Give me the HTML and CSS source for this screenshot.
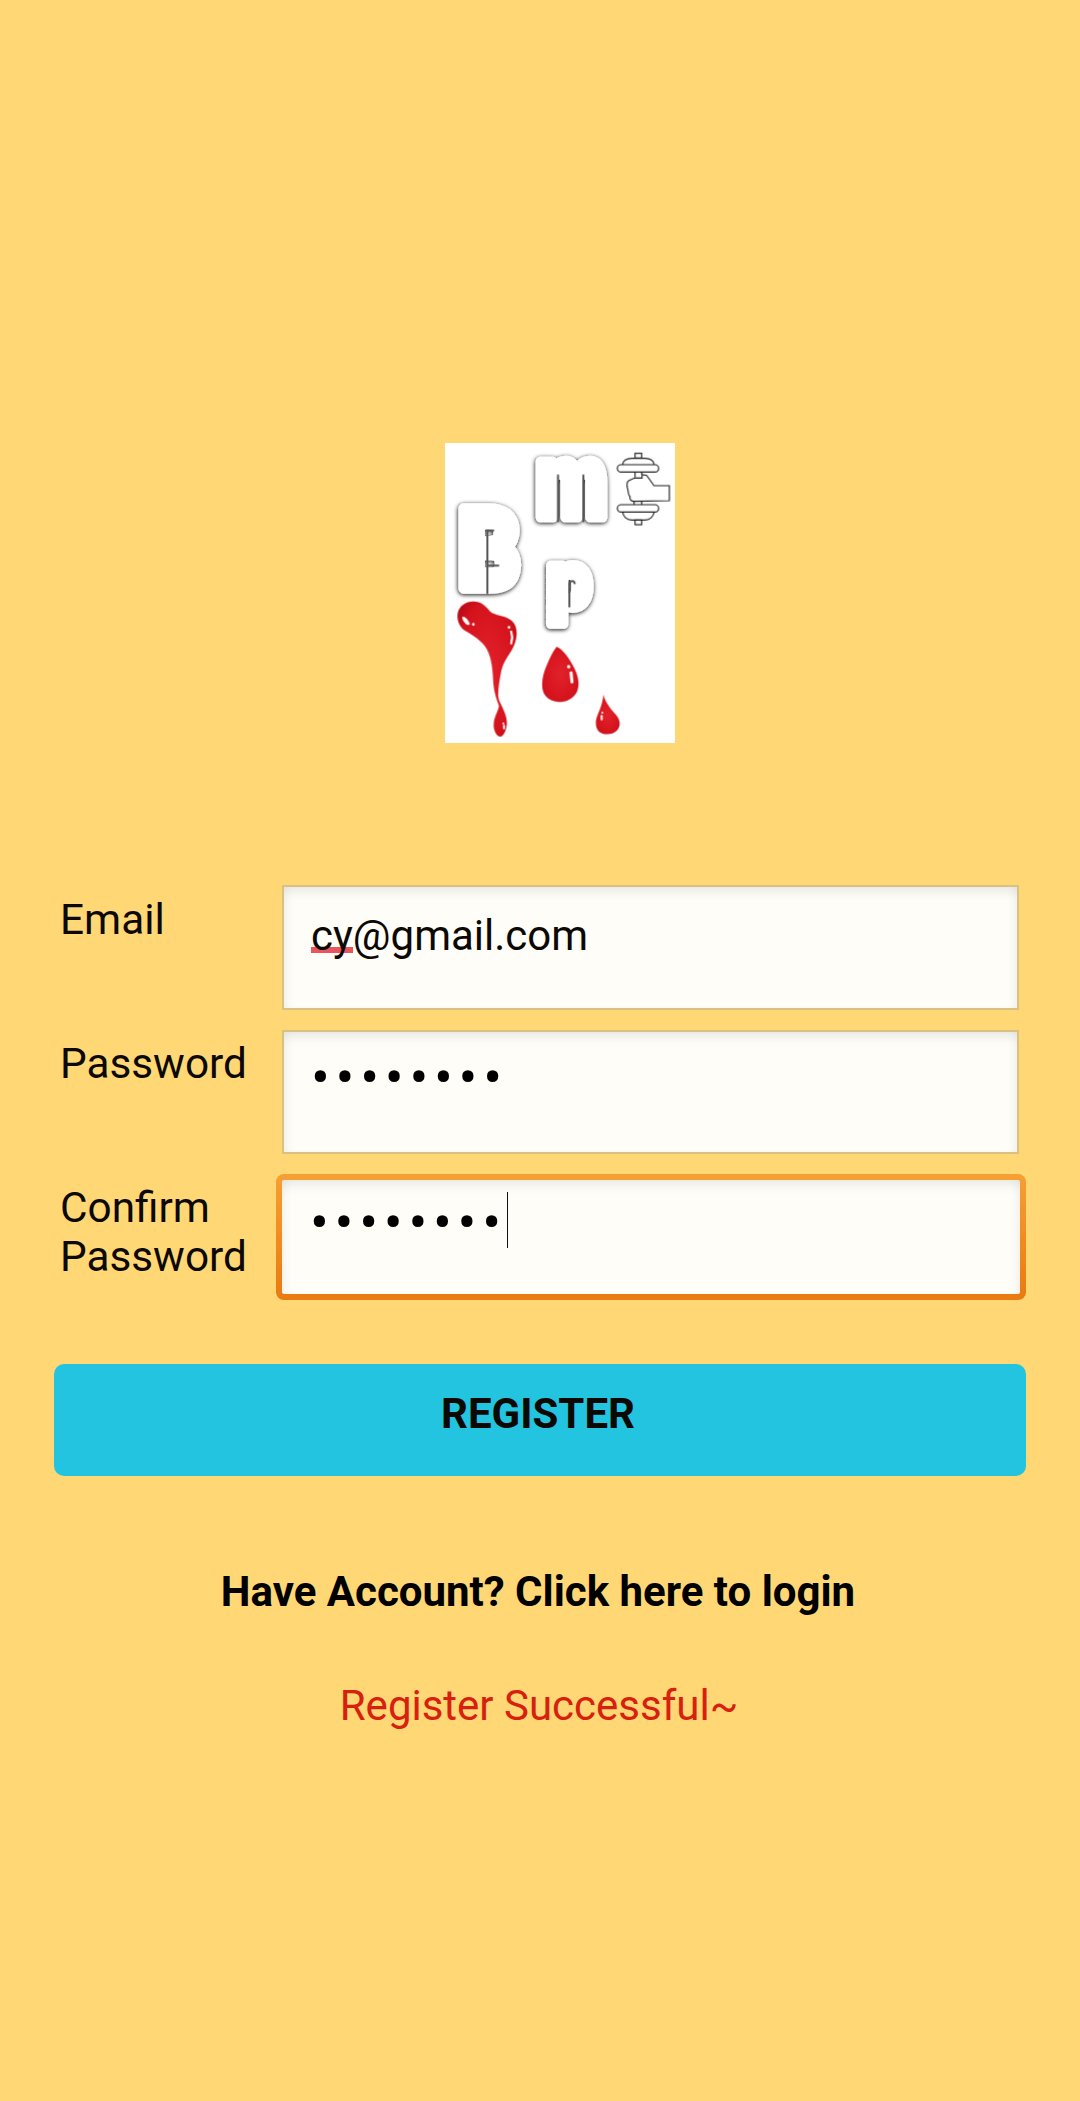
FILE: index.html
```html
<!DOCTYPE html>
<html lang="en">
<head>
<meta charset="utf-8">
<title>Register</title>
<link rel="stylesheet" href="styles.css">
</head>
<body>
<main class="page">
  <svg class="logo" viewBox="45 37 690 900" xmlns="http://www.w3.org/2000/svg" role="img" aria-label="BMP logo">
    <defs>
      <filter id="soft" x="-30%" y="-30%" width="160%" height="160%">
        <feDropShadow dx="-1" dy="3" stdDeviation="7" flood-color="#111" flood-opacity="1"/>
      </filter>
      <filter id="slit" x="-100%" y="-30%" width="300%" height="160%">
        <feGaussianBlur stdDeviation="2"/>
      </filter>
      <radialGradient id="blood" cx=".5" cy=".5" r=".65">
        <stop offset="0" stop-color="#e2222a"/>
        <stop offset=".75" stop-color="#d5131d"/>
        <stop offset="1" stop-color="#b80a14"/>
      </radialGradient>
    </defs>
    <rect x="45" y="37" width="690" height="900" fill="#fff"/>
    <g filter="url(#soft)">
      <text class="logo-letter" transform="translate(318 259) scale(1.076 1.344)">m</text>
      <text class="logo-letter" transform="translate(85 473) scale(1.25 1.455)">B</text>
      <text class="logo-letter logo-p" transform="translate(351 531) scale(1.02 1.03)">p</text>
    </g>
    <g class="logo-slits" filter="url(#slit)">
      <path d="M384 272V134M460 272V134"/>
      <path d="M172 488V300H190M172 405H205"/>
      <path d="M418 528V460C418 450 432 448 434 458"/>
    </g>
    <path fill="url(#blood)" d="M130 512C152 512 166 524 180 542C195 556 225 552 245 570C262 585 264 612 254 640C244 668 222 686 214 720C208 750 203 780 205 800C207 812 212 818 218 832C226 850 233 868 230 886C227 905 218 918 211 918C200 918 190 900 191 882C192 858 203 846 207 826C200 808 192 785 190 760C188 720 186 685 170 655C155 628 125 612 105 600C88 588 80 568 83 548C87 525 108 512 130 512Z"/>
    <path fill="url(#blood)" d="M380 648C398 655 420 685 434 715C446 740 450 765 440 785C428 806 405 815 385 814C360 812 340 798 337 772C334 740 345 715 356 690C364 672 372 658 380 648Z"/>
    <path fill="url(#blood)" d="M520 792C525 815 545 838 560 855C572 870 572 888 560 900C548 912 525 914 510 905C497 896 495 875 500 860C508 840 518 820 520 792Z"/>
    <g fill="#fff">
      <path d="M98 558C104 556 114 566 119 578C120 584 112 584 106 578C100 572 94 562 98 558Z"/>
      <circle cx="130" cy="581" r="4"/>
      <circle cx="237" cy="590" r="4"/>
      <path d="M240 600L246 600L250 620L246 642L240 640L243 620Z"/>
      <circle cx="416" cy="708" r="5"/>
      <rect x="420" y="722" width="9" height="36" rx="4" transform="rotate(-6 424 740)"/>
      <circle cx="517" cy="846" r="3"/>
      <rect x="512" y="853" width="6" height="16" rx="3"/>
      <circle cx="220" cy="878" r="3"/>
      <rect x="219" y="882" width="6" height="14" rx="3"/>
    </g>
    <g class="logo-lines">
      <rect x="615" y="68" width="20" height="14"/>
      <path d="M578 102C578 90 590 83 605 83L645 83C660 83 672 90 672 102"/>
      <rect x="562" y="102" width="124" height="22" rx="11"/>
      <path d="M615 124V140M635 124V132"/>
      <path d="M718 165V210L612 212C604 212 598 206 600 198C592 190 596 180 592 172C590 162 590 154 596 150L614 142H636V132L650 134L672 165Z"/>
      <path d="M612 212V222M635 211V222"/>
      <rect x="562" y="222" width="124" height="22" rx="11"/>
      <path d="M578 244C578 256 590 268 605 268L645 268C660 268 672 256 672 244"/>
      <rect x="615" y="268" width="20" height="14"/>
    </g>
  </svg>

  <form class="form">
    <label class="field-label field-label-first">Email</label>
    <div class="input"><span class="spell">cy</span>@gmail.com</div>

    <label class="field-label">Password</label>
    <div class="input input-dots"><span class="dots">••••••••</span></div>

    <label class="field-label">Confirm Password</label>
    <div class="input input-focus"><span class="dots">••••••••</span><span class="caret"></span></div>
  </form>

  <button class="register" type="button">REGISTER</button>
  <p class="login-link">Have Account? Click here to login</p>
  <p class="message">Register Successful~</p>
</main>
</body>
</html>
```
FILE: styles.css
```css
* { box-sizing: border-box; }
html, body { margin: 0; padding: 0; }
body {
  width: 1080px;
  height: 2101px;
  overflow: hidden;
  background: #ffd875;
  color: #0c0804;
  font-family: Roboto, "Liberation Sans", sans-serif;
  font-size: 42px;
  line-height: 49px;
}
.page { padding: 443px 54px 0; }
.logo {
  display: block;
  width: 230px;
  height: 300px;
  margin-left: 391px;
  overflow: visible;
  filter: blur(.5px);
}
.logo-letter {
  font-family: Roboto, sans-serif;
  font-weight: 900;
  font-size: 230px;
  fill: #fff;
  stroke: #fff;
  stroke-width: 24px;
  stroke-linejoin: round;
}
.logo-p { stroke-width: 28px; }
.logo-slits { fill: none; stroke: #555; stroke-width: 6px; stroke-linecap: round; }
.logo-lines { fill: none; stroke: #1c1c1c; stroke-width: 3.4px; }
.form {
  display: grid;
  grid-template-columns: 222px 737px;
  grid-template-rows: 125px 124px 126px;
  row-gap: 20px;
  margin-top: 142px;
  padding-left: 6px;
}
.field-label { padding-top: 9px; width: 160px; font-size: 42.3px; }
.field-label-first { padding-top: 10px; }
.input {
  position: relative;
  padding: 24px 0 0 27px;
  background: #fffdf8;
  border: 2px solid #d9c182;
  box-shadow: inset 0 10px 10px -4px rgba(70, 70, 60, .09), inset 7px 0 8px -4px rgba(70, 70, 60, .06), inset -7px 0 8px -4px rgba(70, 70, 60, .06);
}
.input-dots { padding-top: 22px; }
.input-focus {
  margin: 0 -7px 0 -6px;
  padding: 19px 0 0 28px;
  border: 6px solid transparent;
  border-radius: 8px;
  background: linear-gradient(#fffdf8, #fffdf8) padding-box, linear-gradient(#f6a033, #e97a10) border-box;
}
.spell {
  display: inline-block;
  background: linear-gradient(#e8555f, #e8555f) no-repeat 0 36px / 100% 6px;
  height: 49px;
}
.dots {
  display: block;
  font-size: 56px;
  line-height: 49px;
  letter-spacing: 5.7px;
  color: #000;
}
.caret {
  position: absolute;
  left: 225px;
  top: 12px;
  width: 1px;
  height: 56px;
  background: #111;
}
.register {
  display: flex;
  justify-content: center;
  align-items: flex-start;
  width: 972px;
  height: 112px;
  margin-top: 64px;
  padding: 25px 4px 0 0;
  border: 0;
  border-radius: 10px;
  background: #22c4e0;
  color: #0c0804;
  font: 700 42px/49px Roboto, sans-serif;
}
.login-link, .message { margin: 0; text-align: center; padding-right: 4px; }
.login-link { margin-top: 91px; font-weight: 700; color: #000; }
.message { margin-top: 65px; padding-right: 2px; color: #d8200f; }
```
